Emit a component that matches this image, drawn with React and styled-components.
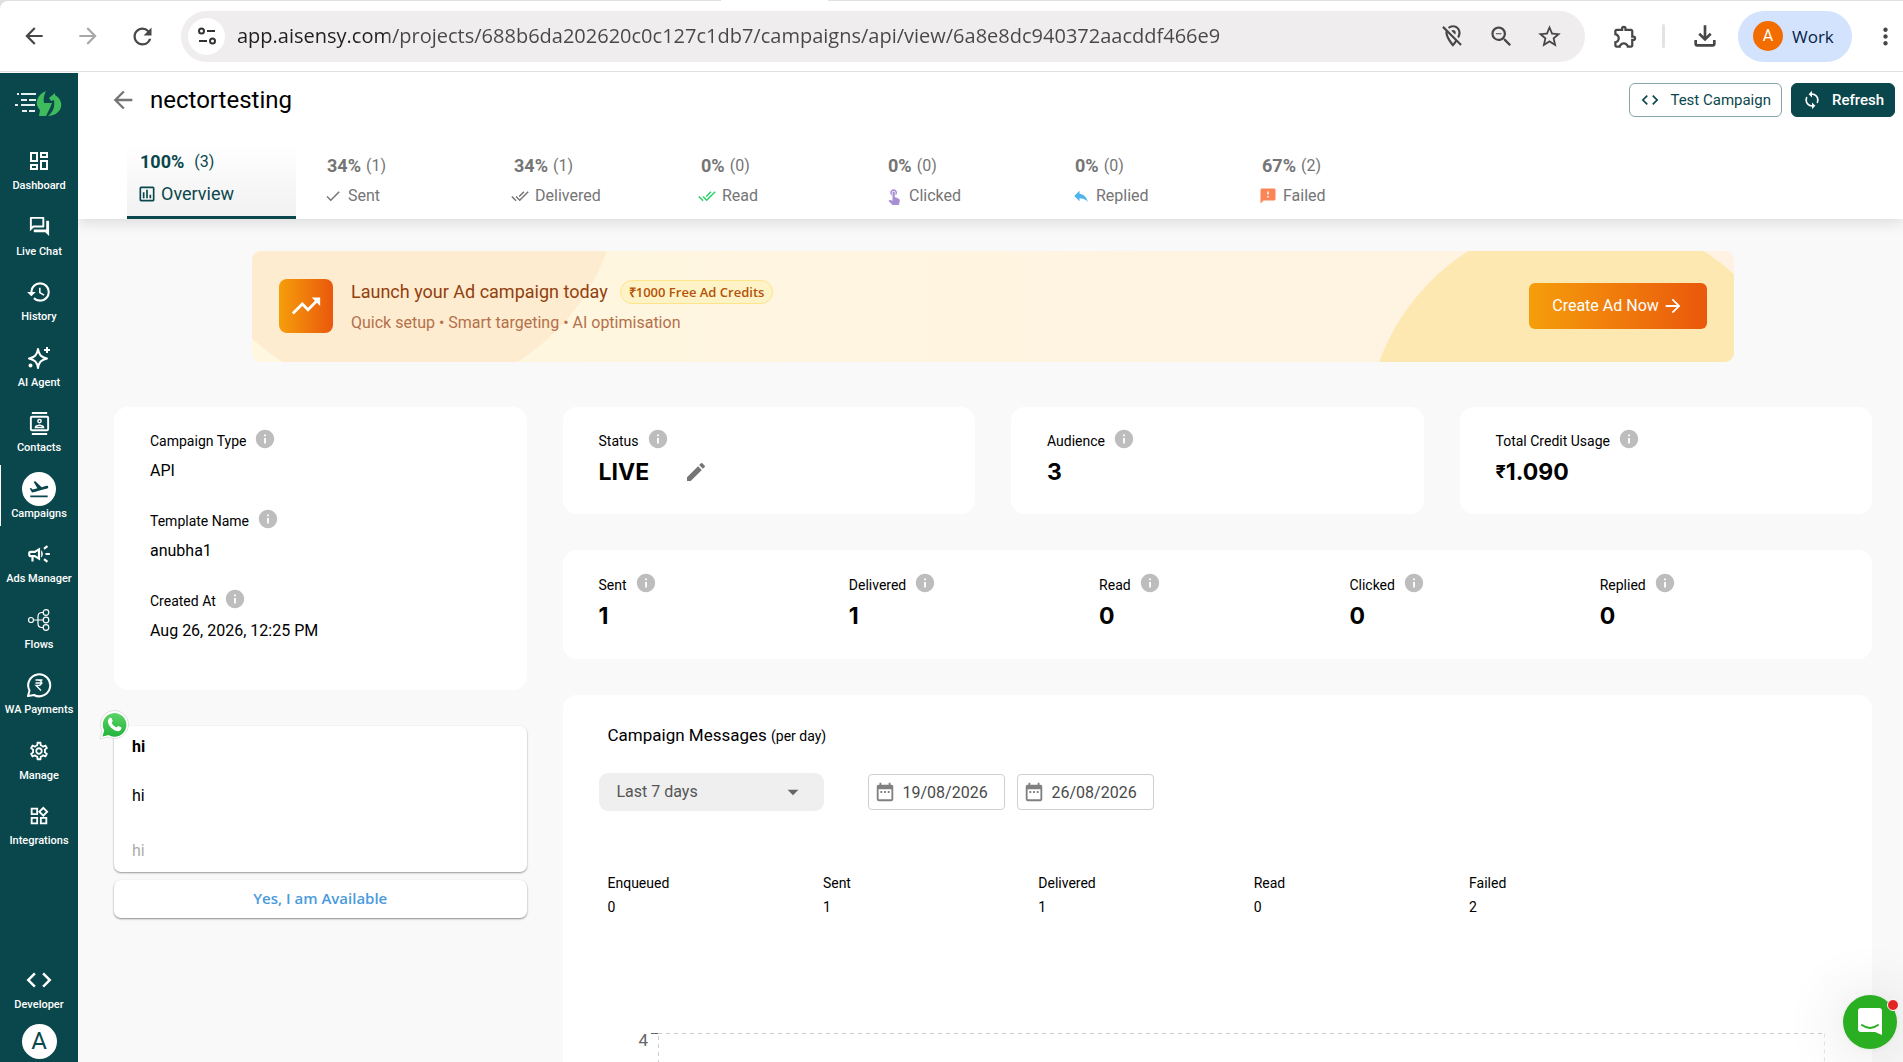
import React from 'react';
import styled, { createGlobalStyle, css } from 'styled-components';
import {
  MdArrowBack, MdArrowForward, MdRefresh, MdZoomOut, MdStarBorder, MdOutlineExtension, MdMoreVert,
  MdOutlineDashboard, MdOutlineQuestionAnswer, MdHistory, MdOutlineContacts, MdFlightTakeoff,
  MdOutlineCampaign, MdOutlineSettings, MdOutlineWidgets, MdCode, MdSync, MdOutlineAssessment,
  MdDone, MdDoneAll, MdTouchApp, MdReply, MdFeedback, MdInfo, MdEdit, MdDateRange, MdTrendingUp,
  MdArrowDropDown, MdOutlineFileDownload, MdOutlineLocationOff
} from 'react-icons/md';

const GlobalStyle = createGlobalStyle`
  * { box-sizing: border-box; }
  body { margin: 0; font-family: Roboto, sans-serif; color: #000; background: #f9f9f9; }
  button, input, select { font-family: inherit; margin: 0; }
  a { color: inherit; text-decoration: none; }
  svg { display: block; flex: none; }
`;

const Window = styled.div`
  height: 100vh;
  display: flex;
  flex-direction: column;
  overflow: hidden;
`;

/* browser */
const TabStrip = styled.div`
  height: 1px;
  flex: none;
  background: #dfdfdf;
`;

const ActiveTab = styled.div`
  width: 107px;
  height: 1px;
  margin-left: 721px;
  background: #fff;
`;

const BarBack = styled.div`
  flex: none;
  background: #dfdfdf;
`;

const BrowserBar = styled.div`
  height: 71px;
  display: flex;
  align-items: center;
  padding: 0 6px 0 22px;
  background: #fff;
  border-bottom: 1px solid #dfdfdf;
  border-top-left-radius: 8px;
  color: #474747;
`;

const BarButton = styled.button`
  border: 0;
  padding: 0;
  background: none;
  color: ${props => props.$muted ? '#a8a8a8' : '#474747'};
  width: 24px;
  margin-right: ${props => props.$gap || 0}px;
  display: flex;
  justify-content: center;
`;

const Omnibox = styled.div`
  flex: 1;
  height: 51px;
  margin-right: 28px;
  border-radius: 26px;
  background: #efedee;
  display: flex;
  align-items: center;
  padding: 0 24px 0 7px;
`;

const SiteInfo = styled.button`
  width: 37px;
  height: 37px;
  border: 0;
  border-radius: 50%;
  padding: 0;
  background: #fff;
  display: flex;
  align-items: center;
  justify-content: center;
`;

const Url = styled.input`
  flex: 1;
  min-width: 0;
  border: 0;
  outline: 0;
  padding: 0 12px;
  font: 20px/30px "Open Sans", sans-serif;
  color: #474747;
  background: linear-gradient(90deg, #1f1f1f 163px, #474747 163px);
  background-clip: text;
  -webkit-text-fill-color: transparent;
`;

const Separator = styled.span`
  width: 3px;
  height: 24px;
  margin-right: 28px;
  border-radius: 2px;
  background: #e3e3e3;
`;

const Profile = styled.button`
  width: 114px;
  height: 51px;
  margin-right: 21px;
  border: 0;
  border-radius: 26px;
  padding: 0 0 0 15px;
  display: flex;
  align-items: center;
  gap: 9px;
  background: #d3e3fd;
  color: #041e49;
  font: 17px "Open Sans", sans-serif;
`;

const ProfileAvatar = styled.span`
  width: 30px;
  height: 30px;
  border-radius: 50%;
  background: #f26c00;
  color: #fff;
  font: 16px/30px Roboto, sans-serif;
  text-align: center;
`;

/* app shell */
const Shell = styled.div`
  flex: 1;
  min-height: 0;
  display: flex;
  padding-top: 1px;
`;

const Sidebar = styled.nav`
  width: 78px;
  flex: none;
  display: flex;
  flex-direction: column;
  align-items: center;
  background: #0a474c;
  color: #fff;
`;

const LogoLink = styled.a`
  height: 64px;
  padding-top: 17px;
`;

const NavList = styled.div`
  width: 100%;
  flex: 0 0 716px;
  display: flex;
  flex-direction: column;
  justify-content: space-between;
`;

const NavItem = styled.a`
  width: 100%;
  height: 61px;
  padding-top: 7px;
  display: flex;
  flex-direction: column;
  align-items: center;
  font-size: 11px;
  font-weight: 500;
  line-height: 16px;
  white-space: nowrap;
  box-shadow: ${props => props.$active ? 'inset 1px 0 #fff' : 'none'};
`;

const NavIcon = styled.span`
  width: 34px;
  height: 34px;
  border-radius: 50%;
  display: flex;
  align-items: center;
  justify-content: center;
  background: ${props => props.$active ? '#fff' : 'none'};
  color: ${props => props.$active ? '#0a474c' : '#fff'};
`;

const NavFooter = styled.div`
  width: 100%;
  margin-top: auto;
  display: flex;
  flex-direction: column;
  align-items: center;
`;

const Account = styled.button`
  width: 35px;
  height: 35px;
  margin: 7px 0 3px;
  border: 0;
  border-radius: 50%;
  padding: 0;
  background: #fff;
  color: #0a474c;
  font-size: 24px;
  line-height: 35px;
`;

const Main = styled.main`
  flex: 1;
  min-width: 0;
  display: flex;
  flex-direction: column;
`;

const Header = styled.header`
  flex: none;
  position: relative;
  margin-top: -1px;
  background: #fff;
  box-shadow: 0 3px 14px rgba(0, 0, 0, 0.13);
  clip-path: inset(0 0 -20px 0);
`;

const TitleRow = styled.div`
  height: 72px;
  padding: 0 8px 16px 31px;
  display: flex;
  align-items: center;
`;

const BackButton = styled.button`
  border: 0;
  padding: 0;
  margin-right: 13px;
  background: none;
  color: #757575;
`;

const Title = styled.h1`
  flex: 1;
  margin: 0;
  font-size: 24px;
  line-height: 32px;
  font-weight: 400;
`;

const HeaderButton = styled.button`
  height: 34px;
  margin-left: 9px;
  border: 1px solid ${props => props.$filled ? '#0a474c' : '#86a5a7'};
  border-radius: 6px;
  padding: 0 10px 1px;
  display: flex;
  align-items: center;
  gap: 10px;
  font-size: 15px;
  font-weight: ${props => props.$filled ? 500 : 400};
  background: ${props => props.$filled ? '#0a474c' : '#fff'};
  color: ${props => props.$filled ? '#fff' : '#0a474c'};
`;

const Tabs = styled.div`
  display: flex;
  gap: 18px;
  padding-left: 49px;
`;

const Tab = styled.button`
  width: 169px;
  height: 75px;
  border: 0;
  border-bottom: 3px solid transparent;
  padding: 12px 0 0 10px;
  display: flex;
  flex-direction: column;
  gap: 10px;
  background: none;
  color: #757575;
  font-size: 16px;
  line-height: 20px;
  text-align: left;

  ${props => props.$active && css`
    padding-top: 8px;
    gap: 12px;
    border-bottom-color: #0a474c;
    background: linear-gradient(#fff, #f1f1f1);
    color: #0a474c;
  `}
`;

const TabCount = styled.span`
  padding-left: 3px;
  display: flex;
  gap: ${props => props.$active ? 10 : 5}px;

  b { font-size: 18px; }
`;

const TabLabel = styled.span`
  display: flex;
  align-items: center;
  gap: ${props => props.$active ? 4 : 6}px;
  font-size: ${props => props.$active ? 18 : 16}px;

  svg { color: ${props => props.$tint}; }
`;

const Content = styled.div`
  flex: 1;
  min-height: 0;
  overflow: hidden;
  padding: 32px 31px 0 36px;
`;

/* ad banner */
const Banner = styled.section`
  position: relative;
  overflow: hidden;
  height: 111px;
  margin: 0 138px 45px;
  padding: 0 27px 2px;
  border-radius: 9px;
  display: flex;
  align-items: center;
  background: linear-gradient(90deg, #fff7df, #fff2e2);

  &::before, &::after {
    content: '';
    position: absolute;
    width: 440px;
    height: 440px;
    border-radius: 50%;
  }
  &::before { left: -72px; top: -295px; background: #feecd0; }
  &::after { right: -72px; bottom: -295px; background: #fee8b2; }
  > * { position: relative; z-index: 1; }
`;

const TrendBox = styled.div`
  width: 54px;
  height: 54px;
  border-radius: 8px;
  display: flex;
  align-items: center;
  justify-content: center;
  background: linear-gradient(90deg, #f59e0b, #ea580c);
  color: #fff;
`;

const BannerText = styled.div`
  flex: 1;
  margin: 3px 0 0 18px;
`;

const BannerTitle = styled.div`
  display: flex;
  align-items: center;
  gap: 12px;
  font-size: 18px;
  line-height: 28px;
  color: #92400e;
`;

const CreditBadge = styled.span`
  height: 24px;
  border: 1px solid #fde68a;
  border-radius: 12px;
  padding: 0 8px;
  background: #fef3c7;
  color: #b45309;
  font: 600 13px/22px "Open Sans", sans-serif;
`;

const BannerSub = styled.p`
  margin: 4px 0 0;
  font-size: 16px;
  line-height: 26px;
  color: #b4704a;
`;

const CreateButton = styled.button`
  width: 178px;
  height: 46px;
  border: 0;
  border-radius: 6px;
  padding: 0;
  display: flex;
  align-items: center;
  justify-content: center;
  gap: 3px;
  background: linear-gradient(90deg, #f59e0b, #ea580c);
  color: #fff;
  font-size: 16px;
`;

/* cards */
const Columns = styled.div`
  display: grid;
  grid-template-columns: repeat(4, minmax(0, 1fr));
  column-gap: 36px;
  align-items: start;
`;

const Side = styled.div`
  display: flex;
  flex-direction: column;
`;

const Wide = styled.div`
  grid-column: span 3;
  display: flex;
  flex-direction: column;
  gap: 36px;
`;

const TopCards = styled.div`
  display: grid;
  grid-template-columns: repeat(3, minmax(0, 1fr));
  gap: 36px;
`;

const Card = styled.section`
  background: #fff;
  border-radius: 14px;
  padding: 20px 36px;
`;

const InfoCard = styled(Card)`
  height: 283px;
  display: flex;
  flex-direction: column;
  gap: 22px;
`;

const StatusCard = styled(Card)`
  height: 107px;
`;

const StatsCard = styled(Card)`
  height: 109px;
  padding-top: 21px;
  padding-right: 22px;
  display: grid;
  grid-template-columns: repeat(5, 1fr);
`;

const FieldLabel = styled.div`
  height: 28px;
  display: flex;
  align-items: center;
  gap: 8px;
  font-size: 14px;

  svg { color: #bdbdbd; margin-bottom: 4px; }
`;

const FieldValue = styled.div`
  margin-top: 2px;
  font-size: 16px;
  line-height: 28px;
`;

const BigValue = styled.div`
  display: flex;
  align-items: center;
  font-family: Inter, sans-serif;
  font-size: 23px;
  font-weight: 700;
  line-height: 34px;

  small { font-size: 18px; }
`;

const EditButton = styled.button`
  margin-left: 35px;
  border: 0;
  padding: 0;
  background: none;
  color: #757575;
`;

/* template preview */
const Message = styled.section`
  position: relative;
  height: 146px;
  margin-top: 36px;
  border-radius: 7px;
  padding: 9px 18px;
  background: #fff;
  box-shadow: 0 1px 2px rgba(0, 0, 0, 0.4);
  font-size: 16px;
  line-height: 24px;
`;

const MessageHead = styled.div`
  font-weight: 700;
`;

const MessageBody = styled.div`
  margin: 25px 0 31px;
`;

const MessageFoot = styled.div`
  color: #acacac;
`;

const WhatsappMark = styled.span`
  position: absolute;
  left: -15px;
  top: -17px;
`;

const ReplyButton = styled.button`
  height: 38px;
  margin-top: 8px;
  border: 0;
  border-radius: 7px;
  padding: 0 0 2px;
  background: #fff;
  box-shadow: 0 1px 2px rgba(0, 0, 0, 0.45);
  color: #4a9bdc;
  font: 600 15px "Open Sans", sans-serif;
`;

/* messages chart */
const ChartCard = styled(Card)`
  min-height: 600px;
  padding-top: 26px;
`;

const ChartTitle = styled.h2`
  margin: 0 9px 23px;
  font-size: 17px;
  font-weight: 400;
  line-height: 28px;

  small { font-size: 14px; }
`;

const Filters = styled.div`
  display: flex;
  align-items: center;
`;

const RangeBox = styled.div`
  position: relative;
  width: 225px;
  margin-right: 44px;
  color: #666;

  svg { position: absolute; right: 18px; top: 6px; pointer-events: none; }
`;

const RangeSelect = styled.select`
  width: 100%;
  height: 38px;
  border: 0;
  border-radius: 9px;
  padding: 0 18px 1px;
  appearance: none;
  background: #efefef;
  color: #555;
  font-size: 16px;
`;

const DateBox = styled.label`
  width: 137px;
  height: 36px;
  margin-right: 12px;
  border: 1px solid #cfcfcf;
  border-radius: 4px;
  padding-left: 5px;
  display: flex;
  align-items: center;
  gap: 7px;
  color: #808080;
`;

const DateInput = styled.input`
  width: 94px;
  border: 0;
  outline: 0;
  padding: 0;
  background: none;
  color: #4a4a4a;
  font-size: 16px;
`;

const Totals = styled.dl`
  display: grid;
  grid-template-columns: repeat(5, 1fr);
  max-width: 1077px;
  margin: 60px 9px 0;
  font-size: 14px;
  line-height: 24px;

  dd { margin: 0; }
`;

const ChartArea = styled.div`
  display: flex;
  margin: 107px 11px 0 0;
`;

const Axis = styled.svg`
  width: 59px;
  height: 300px;
  font-size: 17px;
`;

const Plot = styled.svg`
  flex: 1;
  min-width: 0;
  height: 293px;
  margin-top: 7px;
`;

const ChatButton = styled.button`
  position: fixed;
  right: 6px;
  bottom: 13px;
  width: 54px;
  height: 54px;
  border: 0;
  border-radius: 50%;
  padding: 0;
  display: flex;
  align-items: center;
  justify-content: center;
  background: #2aae22;
  box-shadow: 0 1px 6px rgba(0, 0, 0, 0.06), 0 2px 62px rgba(0, 0, 0, 0.16);
`;

const Dot = styled.span`
  position: absolute;
  right: -2px;
  top: 4px;
  width: 12px;
  height: 12px;
  border: 1px solid #fff;
  border-radius: 50%;
  background: #e32424;
`;

function Logo() {
  return (
    <svg width="48" height="28" viewBox="0 0 48 28" fill="none">
      <path d="M2 4h2M6 4h15M6 10h6M14 10h7M0 15h3M6 15h14M7 21h5M14 21h6" stroke="#e3f0ee" strokeWidth="2" />
      <path d="M31 1C24 4 21 9 22 15c1 3 3 5 3 5l-1 6h7l4-8 2-5h-8c-1-4 0-8 2-12z" fill="#3fbb5d" />
      <path d="M34 8l6-5v2c5 3 7 8 6 12-1 5-7 9-13 9 5-4 7-9 6-16l-3 1z" fill="#3fbb5d" />
    </svg>
  );
}

function Sparkle() {
  return (
    <svg width="24" height="24" viewBox="0 0 24 24" fill="none" stroke="currentColor" strokeWidth="2" strokeLinejoin="round">
      <path d="M11 3c1 6 3 8 9 9.500-6 1.500-8 3.500-9 9.500-1-6-3-8-9-9.500 6-1.500 8-3.500 9-9.500z" />
      <path d="M20 1v6M17 4h6" />
      <circle cx="3.500" cy="19.500" r="1" fill="currentColor" />
    </svg>
  );
}

function Flows() {
  return (
    <svg width="24" height="24" viewBox="0 0 24 24" fill="none" stroke="currentColor" strokeWidth="1.2">
      <circle cx="4" cy="12" r="2.5" />
      <circle cx="19" cy="4.500" r="2.800" />
      <circle cx="19" cy="12" r="2.800" />
      <circle cx="19" cy="19.500" r="2.800" />
      <path d="M6.500 12h9.700M16 4.500h-1q-4 0-4 4v7q0 4 4 4h1" />
    </svg>
  );
}

function Payments() {
  return (
    <svg width="26" height="26" viewBox="0 0 26 26" fill="none" stroke="currentColor">
      <path d="M2 24l1.500-5.500A11 11 0 1 1 8 23z" strokeWidth="2" strokeLinejoin="round" />
      <path d="M9.500 8h7M9.500 11h7M10 8h2c4.500 0 4.500 5.500 0 5.500h-2l5 5" strokeWidth="1.300" />
    </svg>
  );
}

function Tune() {
  return (
    <svg width="20" height="20" viewBox="0 0 20 20" fill="none" stroke="#333" strokeWidth="2">
      <circle cx="4.500" cy="5" r="2.500" />
      <path d="M10 5h8M2 15h8" />
      <circle cx="15.500" cy="15" r="2.500" />
    </svg>
  );
}

function Whatsapp() {
  return (
    <svg width="30" height="32" viewBox="0 0 30 32">
      <defs>
        <linearGradient id="wa" x1="0" y1="0" x2="0" y2="1">
          <stop offset="0" stopColor="#5dd267" />
          <stop offset="1" stopColor="#22b43a" />
        </linearGradient>
      </defs>
      <path d="M1 30l2-8A14 14 0 1 1 9 28z" fill="#fff" stroke="#ccc" strokeWidth=".6" />
      <path d="M3.500 27.500l1.700-6A11.800 11.800 0 1 1 9.500 26z" fill="url(#wa)" />
      <path d="M10.500 9c.5-.5 1.700-.5 2 0l1.200 3c.1.600-1.200 1.500-1 2 1 2 2.500 3.400 4.600 4.300.7.200 1.300-1.600 2-1.400l2.900 1.400c.6.600 0 2.600-1 3.200-3 2-8-1-10.500-4.500-2-3-2.500-6-.2-8z" fill="#fff" />
    </svg>
  );
}

const navItems = [
  { label: 'Dashboard', icon: <MdOutlineDashboard size={24} /> },
  { label: 'Live Chat', icon: <MdOutlineQuestionAnswer size={23} /> },
  { label: 'History', icon: <MdHistory size={26} /> },
  { label: 'AI Agent', icon: <Sparkle /> },
  { label: 'Contacts', icon: <MdOutlineContacts size={23} /> },
  { label: 'Campaigns', icon: <MdFlightTakeoff size={22} />, active: true },
  { label: 'Ads Manager', icon: <MdOutlineCampaign size={26} /> },
  { label: 'Flows', icon: <Flows /> },
  { label: 'WA Payments', icon: <Payments /> },
  { label: 'Manage', icon: <MdOutlineSettings size={22} /> },
  { label: 'Integrations', icon: <MdOutlineWidgets size={22} /> }
];

const tabs = [
  { label: 'Overview', percent: '100%', count: 3, icon: <MdOutlineAssessment size={20} />, tint: '#0a474c', active: true },
  { label: 'Sent', percent: '34%', count: 1, icon: <MdDone size={18} />, tint: '#757575' },
  { label: 'Delivered', percent: '34%', count: 1, icon: <MdDoneAll size={18} />, tint: '#757575' },
  { label: 'Read', percent: '0%', count: 0, icon: <MdDoneAll size={18} />, tint: '#25d366' },
  { label: 'Clicked', percent: '0%', count: 0, icon: <MdTouchApp size={18} />, tint: '#a78fd3' },
  { label: 'Replied', percent: '0%', count: 0, icon: <MdReply size={18} />, tint: '#4fb3ee' },
  { label: 'Failed', percent: '67%', count: 2, icon: <MdFeedback size={18} />, tint: '#fa8557' }
];

const details = [
  ['Campaign Type', 'API'],
  ['Template Name', 'anubha1'],
  ['Created At', 'Aug 26, 2026, 12:25 PM']
];

const stats = [['Sent', 1], ['Delivered', 1], ['Read', 0], ['Clicked', 0], ['Replied', 0]];

const totals = [['Enqueued', 0], ['Sent', 1], ['Delivered', 1], ['Read', 0], ['Failed', 2]];

function Label({ children }) {
  return <FieldLabel>{children}<MdInfo size={22} /></FieldLabel>;
}

function Browser() {
  return (
    <>
      <TabStrip><ActiveTab /></TabStrip>
      <BarBack>
        <BrowserBar>
          <BarButton aria-label="Back" $gap={30}><MdArrowBack size={26} /></BarButton>
          <BarButton aria-label="Forward" $gap={30} $muted><MdArrowForward size={26} /></BarButton>
          <BarButton aria-label="Reload" $gap={27}><MdRefresh size={27} /></BarButton>
          <Omnibox>
            <SiteInfo aria-label="Site information"><Tune /></SiteInfo>
            <Url
              aria-label="Address"
              readOnly
              value="app.aisensy.com/projects/688b6da202620c0c127c1db7/campaigns/api/view/6a8e8dc940372aacddf466e9"
            />
            <BarButton aria-label="Location blocked" $gap={24}><MdOutlineLocationOff size={26} /></BarButton>
            <BarButton aria-label="Zoom" $gap={24}><MdZoomOut size={27} /></BarButton>
            <BarButton aria-label="Bookmark"><MdStarBorder size={27} /></BarButton>
          </Omnibox>
          <BarButton aria-label="Extensions" $gap={25}><MdOutlineExtension size={27} /></BarButton>
          <Separator />
          <BarButton aria-label="Downloads" $gap={21}><MdOutlineFileDownload size={32} /></BarButton>
          <Profile><ProfileAvatar>A</ProfileAvatar>Work</Profile>
          <BarButton aria-label="Menu"><MdMoreVert size={27} /></BarButton>
        </BrowserBar>
      </BarBack>
    </>
  );
}

function Nav() {
  return (
    <Sidebar>
      <LogoLink href="#home" aria-label="Home"><Logo /></LogoLink>
      <NavList>
        {navItems.map(item => (
          <NavItem href="#nav" key={item.label} $active={item.active}>
            <NavIcon $active={item.active}>{item.icon}</NavIcon>
            {item.label}
          </NavItem>
        ))}
      </NavList>
      <NavFooter>
        <NavItem href="#developer"><NavIcon><MdCode size={30} /></NavIcon>Developer</NavItem>
        <Account>A</Account>
      </NavFooter>
    </Sidebar>
  );
}

function PageHeader() {
  return (
    <Header>
      <TitleRow>
        <BackButton aria-label="Back to campaigns"><MdArrowBack size={28} /></BackButton>
        <Title>nectortesting</Title>
        <HeaderButton><MdCode size={20} />Test Campaign</HeaderButton>
        <HeaderButton $filled><MdSync size={20} />Refresh</HeaderButton>
      </TitleRow>
      <Tabs>
        {tabs.map(tab => (
          <Tab key={tab.label} $active={tab.active}>
            <TabCount $active={tab.active}><b>{tab.percent}</b>({tab.count})</TabCount>
            <TabLabel $active={tab.active} $tint={tab.tint}>{tab.icon}{tab.label}</TabLabel>
          </Tab>
        ))}
      </Tabs>
    </Header>
  );
}

function AdBanner() {
  return (
    <Banner>
      <TrendBox><MdTrendingUp size={34} /></TrendBox>
      <BannerText>
        <BannerTitle>Launch your Ad campaign today<CreditBadge>₹1000 Free Ad Credits</CreditBadge></BannerTitle>
        <BannerSub>Quick setup • Smart targeting • AI optimisation</BannerSub>
      </BannerText>
      <CreateButton>Create Ad Now<MdArrowForward size={22} /></CreateButton>
    </Banner>
  );
}

function MessagesChart() {
  return (
    <ChartCard>
      <ChartTitle>Campaign Messages <small>(per day)</small></ChartTitle>
      <Filters>
        <RangeBox>
          <RangeSelect aria-label="Period" defaultValue="7">
            <option value="7">Last 7 days</option>
            <option value="30">Last 30 days</option>
          </RangeSelect>
          <MdArrowDropDown size={26} />
        </RangeBox>
        <DateBox><MdDateRange size={22} /><DateInput aria-label="From" defaultValue="19/08/2026" /></DateBox>
        <DateBox><MdDateRange size={22} /><DateInput aria-label="To" defaultValue="26/08/2026" /></DateBox>
      </Filters>
      <Totals>
        {totals.map(([name, value]) => (
          <div key={name}><dt>{name}</dt><dd>{value}</dd></div>
        ))}
      </Totals>
      <ChartArea>
        <Axis>
          <text x="49" y="20" textAnchor="end" fill="#666">4</text>
          <path d="M52 7.500h7" stroke="#666" />
        </Axis>
        <Plot>
          <rect x="0" y="0" width="100%" height="400" fill="none" stroke="#ccc" strokeWidth="2" strokeDasharray="4 4" />
        </Plot>
      </ChartArea>
    </ChartCard>
  );
}

function App() {
  return (
    <Window>
      <GlobalStyle />
      <Browser />
      <Shell>
        <Nav />
        <Main>
          <PageHeader />
          <Content>
            <AdBanner />
            <Columns>
              <Side>
                <InfoCard>
                  {details.map(([name, value]) => (
                    <div key={name}>
                      <Label>{name}</Label>
                      <FieldValue>{value}</FieldValue>
                    </div>
                  ))}
                </InfoCard>
                <Message>
                  <WhatsappMark><Whatsapp /></WhatsappMark>
                  <MessageHead>hi</MessageHead>
                  <MessageBody>hi</MessageBody>
                  <MessageFoot>hi</MessageFoot>
                </Message>
                <ReplyButton>Yes, I am Available</ReplyButton>
              </Side>
              <Wide>
                <TopCards>
                  <StatusCard>
                    <Label>Status</Label>
                    <BigValue>LIVE<EditButton aria-label="Edit status"><MdEdit size={24} /></EditButton></BigValue>
                  </StatusCard>
                  <StatusCard>
                    <Label>Audience</Label>
                    <BigValue>3</BigValue>
                  </StatusCard>
                  <StatusCard>
                    <Label>Total Credit Usage</Label>
                    <BigValue><small>₹</small>1.090</BigValue>
                  </StatusCard>
                </TopCards>
                <StatsCard>
                  {stats.map(([name, value]) => (
                    <div key={name}>
                      <Label>{name}</Label>
                      <BigValue>{value}</BigValue>
                    </div>
                  ))}
                </StatsCard>
                <MessagesChart />
              </Wide>
            </Columns>
          </Content>
        </Main>
      </Shell>
      <ChatButton aria-label="Open chat">
        <svg width="24" height="28" viewBox="0 0 24 28">
          <path d="M3 0h18a3 3 0 0 1 3 3v24l-7-3H3a3 3 0 0 1-3-3V3a3 3 0 0 1 3-3z" fill="#fff" />
          <path d="M4 17q8 6 16 0" fill="none" stroke="#2aae22" strokeWidth="2" strokeLinecap="round" />
        </svg>
        <Dot />
      </ChatButton>
    </Window>
  );
}

export default App;
